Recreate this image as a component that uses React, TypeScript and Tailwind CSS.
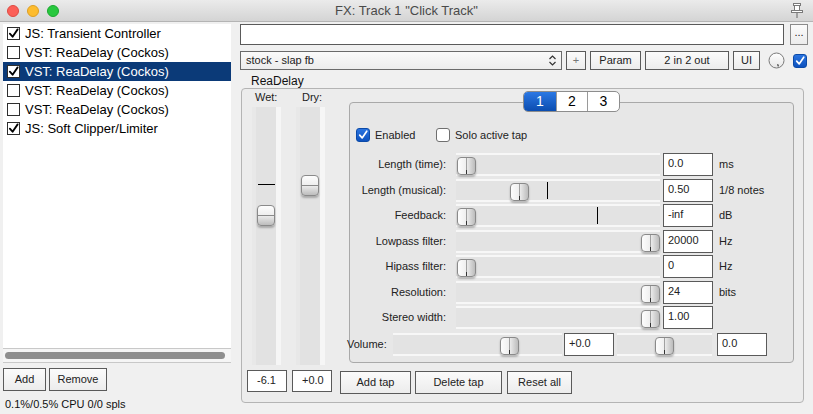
import React from 'react';

type Row = {
  label: string;
  value: string;
  unit?: string;
  thumb: number; // 0..1
  tick?: number; // px offset of the marker line
};

const rows: Row[] = [
  { label: 'Length (time):', value: '0.0', unit: 'ms', thumb: 0 },
  { label: 'Length (musical):', value: '0.50', unit: '1/8 notes', thumb: 0.29, tick: 91 },
  { label: 'Feedback:', value: '-inf', unit: 'dB', thumb: 0, tick: 141 },
  { label: 'Lowpass filter:', value: '20000', unit: 'Hz', thumb: 1 },
  { label: 'Hipass filter:', value: '0', unit: 'Hz', thumb: 0 },
  { label: 'Resolution:', value: '24', unit: 'bits', thumb: 1 },
  { label: 'Stereo width:', value: '1.00', thumb: 1 },
];

const plugins = [
  { name: 'JS: Transient Controller', on: true },
  { name: 'VST: ReaDelay (Cockos)', on: false },
  { name: 'VST: ReaDelay (Cockos)', on: true, selected: true },
  { name: 'VST: ReaDelay (Cockos)', on: false },
  { name: 'VST: ReaDelay (Cockos)', on: false },
  { name: 'JS: Soft Clipper/Limiter', on: true },
];

const CheckMark = ({ color = '#000', size = 11 }: { color?: string; size?: number }) => (
  <svg width={size} height={size} viewBox="0 0 12 12">
    <path d="M2 6.2 L5 9.5 L10.5 1.5" stroke={color} strokeWidth="2" fill="none" strokeLinecap="round" strokeLinejoin="round" />
  </svg>
);

const ListCheck = ({ on }: { on: boolean }) => (
  <div className="w-[13px] h-[13px] border border-[#2e2e2e] bg-white flex items-center justify-center shrink-0">
    {on && <CheckMark />}
  </div>
);

const BlueCheck = () => (
  <div className="w-[14px] h-[14px] rounded-[3px] bg-gradient-to-b from-[#2a74e0] to-[#0d52be] border border-[#0b4aa8] flex items-center justify-center shrink-0">
    <CheckMark color="#fff" size={10} />
  </div>
);

const Btn = ({ children, className = '' }: { children: React.ReactNode; className?: string }) => (
  <div
    className={`flex items-center justify-center border border-[#5a5a5a] bg-gradient-to-b from-[#fbfbfb] to-[#ececec] text-[11px] text-[#222] ${className}`}
  >
    {children}
  </div>
);

const ValueBox = ({ value, className = '' }: { value: string; className?: string }) => (
  <div className={`border border-[#5a5a5a] bg-white text-[11px] leading-[14px] pl-[4px] pt-[2px] text-[#222] shrink-0 ${className}`}>
    {value}
  </div>
);

const HThumb = ({ left }: { left: number }) => (
  <div
    className="absolute top-[2px] w-[19px] h-[18px] rounded-[4px] border border-[#8a8a8a] bg-gradient-to-r from-[#fdfdfd] via-[#eeeeee] to-[#bcbcbc] shadow-[0_2px_2px_rgba(0,0,0,0.25)]"
    style={{ left }}
  >
    <div className="absolute left-[8px] top-0 bottom-0 w-px bg-[#a0a0a0]" />
    <div className="absolute left-[8px] bottom-0 h-[4px] w-px bg-[#333]" />
  </div>
);

const HTrack = ({ width, thumb, tick }: { width: number; thumb: number; tick?: number }) => (
  <div className="relative h-[23px] border-y-2 border-[#f7f7f7] bg-[#e3e3e3] shrink-0" style={{ width }}>
    {tick !== undefined && <div className="absolute top-[1px] h-[17px] w-px bg-black" style={{ left: tick }} />}
    <HThumb left={Math.round(thumb * (width - 20)) + 1} />
  </div>
);

const VTrack = ({ thumbTop, line }: { thumbTop: number; line: number }) => (
  <div className="relative w-[29px] h-[258px] border-l-4 border-l-[#e8e8e8] border-r-[5px] border-r-[#f6f6f6] bg-[#e2e2e2]">
    <div className="absolute left-[2px] w-[17px] h-px bg-black" style={{ top: line }} />
    <div
      className="absolute left-[1px] w-[18px] h-[21px] rounded-[4px] border border-[#8a8a8a] bg-gradient-to-b from-[#fdfdfd] via-[#eeeeee] to-[#bdbdbd] shadow-[0_2px_2px_rgba(0,0,0,0.25)]"
      style={{ top: thumbTop }}
    >
      <div className="absolute top-[9px] left-0 right-0 h-px bg-[#8a8a8a]" />
    </div>
  </div>
);

const TitleBar = () => (
  <div className="relative h-[22px] shrink-0 flex items-center bg-gradient-to-b from-[#ebebeb] to-[#d4d4d4] border-b border-[#b4b4b4]">
    <div className="flex items-center gap-[8px] pl-[7px]">
      <div className="w-[12px] h-[12px] rounded-full bg-[#fc5f57] border border-[#de4a42]" />
      <div className="w-[12px] h-[12px] rounded-full bg-[#fdbc2e] border border-[#de9f23]" />
      <div className="w-[12px] h-[12px] rounded-full bg-[#28c83f] border border-[#1ba82f]" />
    </div>
    <div className="absolute left-0 right-0 text-center text-[13px] text-[#4a4a4a] pointer-events-none">
      FX: Track 1 "Click Track"
    </div>
    <div className="ml-auto mr-[9px]">
      <svg width="14" height="17" viewBox="0 0 14 17">
        <rect x="3.5" y="1.5" width="7" height="2" fill="#fff" stroke="#7a7a7a" />
        <rect x="4.5" y="3.5" width="5" height="5" fill="#fff" stroke="#7a7a7a" />
        <rect x="1.5" y="8.5" width="11" height="2" fill="#fff" stroke="#7a7a7a" />
        <path d="M7 10.5 V16" stroke="#7a7a7a" strokeWidth="1.2" />
      </svg>
    </div>
  </div>
);

const LeftPane = () => (
  <div className="w-[240px] shrink-0 flex flex-col pt-[2px] pl-[3px]">
    <div className="w-[228px] h-[324px] bg-white">
      {plugins.map((p, i) => (
        <div
          key={i}
          className={`h-[19px] flex items-center pl-[4px] text-[13px] ${p.selected ? 'bg-[#0b3a78] text-white' : 'text-black'}`}
        >
          <ListCheck on={p.on} />
          <span className="ml-[5px] whitespace-nowrap">{p.name}</span>
        </div>
      ))}
    </div>
    <div className="w-[228px] h-[15px] border-y border-[#c8c8c8] bg-[#f5f5f5] flex items-center pl-[2px]">
      <div className="w-[220px] h-[7px] rounded-full bg-[#8e8e8e]" />
    </div>
    <div className="flex gap-[3px] mt-[5px]">
      <Btn className="w-[43px] h-[23px]">Add</Btn>
      <Btn className="w-[58px] h-[23px]">Remove</Btn>
    </div>
    <div className="mt-[6px] pl-[2px] text-[11px] leading-[14px] text-[#111]">0.1%/0.5% CPU 0/0 spls</div>
  </div>
);

const TopControls = () => (
  <>
    <div className="flex h-[21px]">
      <div className="w-[544px] border border-[#5a5a5a] bg-white" />
      <Btn className="ml-[6px] w-[18px] h-[21px] border-[#8a8a8a]">
        <span className="-mt-[4px]">...</span>
      </Btn>
    </div>
    <div className="flex items-center h-[19px] mt-[6px]">
      <div className="w-[322px] h-[19px] border border-[#6a6a6a] bg-gradient-to-b from-[#fafafa] to-[#ececec] flex items-center pl-[5px] text-[11px] text-[#222]">
        stock - slap fb
        <svg className="ml-auto mr-[4px]" width="9" height="13" viewBox="0 0 9 13">
          <path d="M1.5 5 L4.5 2 L7.5 5 M1.5 8 L4.5 11 L7.5 8" stroke="#333" strokeWidth="1.2" fill="none" />
        </svg>
      </div>
      <Btn className="ml-[4px] w-[20px] h-[19px] text-[#777]">+</Btn>
      <Btn className="ml-[4px] w-[51px] h-[19px]">Param</Btn>
      <Btn className="ml-[4px] w-[84px] h-[19px]">2 in 2 out</Btn>
      <Btn className="ml-[4px] w-[27px] h-[19px]">UI</Btn>
      <svg className="ml-[8px]" width="17" height="17" viewBox="0 0 17 17">
        <defs>
          <linearGradient id="kn" x1="0" y1="0" x2="0" y2="1">
            <stop offset="0" stopColor="#ffffff" />
            <stop offset="1" stopColor="#e6e6e6" />
          </linearGradient>
        </defs>
        <circle cx="8.5" cy="8.5" r="7.5" fill="url(#kn)" stroke="#7a7a7a" />
        <path d="M9.6 12.2 L10.4 14.4" stroke="#333" strokeWidth="1.2" />
      </svg>
      <div className="ml-[8px]">
        <BlueCheck />
      </div>
    </div>
  </>
);

const ParamRow = ({ row }: { row: Row }) => (
  <div className="flex items-center h-[23px]">
    <div className="w-[96px] text-right text-[11px] text-[#222] whitespace-nowrap">{row.label}</div>
    <div className="ml-[10px]">
      <HTrack width={204} thumb={row.thumb} tick={row.tick} />
    </div>
    <ValueBox value={row.value} className="ml-[3px] w-[50px] h-[23px]" />
    {row.unit && <div className="ml-[6px] text-[11px] text-[#222] whitespace-nowrap">{row.unit}</div>}
  </div>
);

const InnerGroup = () => (
  <div className="ml-[24px] mt-[13px] w-[445px] h-[261px] rounded-[4px] border border-[#a9a9a9] bg-[#e7e7e7] flex flex-col">
    <div className="flex justify-center -mt-[12px]">
      <div className="flex h-[21px] rounded-[5px] border border-[#8d8d8d] bg-white overflow-hidden text-[14px]">
        <div className="w-[32px] flex items-center justify-center text-white bg-gradient-to-b from-[#2b78e4] to-[#0b4db0]">1</div>
        <div className="w-[31px] flex items-center justify-center border-l border-[#9a9a9a]">2</div>
        <div className="w-[32px] flex items-center justify-center border-l border-[#9a9a9a]">3</div>
      </div>
    </div>
    <div className="flex items-center mt-[16px] pl-[6px] h-[14px] text-[11px] text-[#222]">
      <div className="w-[80px] flex items-center">
        <BlueCheck />
        <span className="ml-[5px]">Enabled</span>
      </div>
      <div className="w-[14px] h-[14px] rounded-[3px] border border-[#6f6f6f] bg-white" />
      <span className="ml-[5px]">Solo active tap</span>
    </div>
    <div className="mt-[11px] flex flex-col gap-[2.5px]">
      {rows.map((r, i) => (
        <ParamRow key={i} row={r} />
      ))}
    </div>
    <div className="flex items-center h-[23px] mt-[4px] -ml-[3px]">
      <div className="w-[46px] text-[11px] text-[#222]">Volume:</div>
      <HTrack width={169} thumb={0.71} />
      <ValueBox value="+0.0" className="ml-[2px] w-[50px] h-[23px]" />
      <div className="ml-[3px]">
        <HTrack width={95} thumb={0.49} />
      </div>
      <ValueBox value="0.0" className="ml-[5px] w-[50px] h-[23px]" />
    </div>
  </div>
);

const OuterGroup = () => (
  <div className="ml-[1px] w-[563px] h-[315px] rounded-[4px] border border-[#b4b4b4] bg-[#ececec] flex flex-col">
    <div className="flex">
      <div className="flex pl-[10px]">
        <div className="flex flex-col">
          <div className="mt-[1px] h-[14px] pl-[3px] text-[11px] leading-[14px] text-[#222]">Wet:</div>
          <div className="mt-[3px]">
            <VTrack thumbTop={98} line={77} />
          </div>
        </div>
        <div className="flex flex-col ml-[15px]">
          <div className="mt-[1px] h-[14px] pl-[6px] text-[11px] leading-[14px] text-[#222]">Dry:</div>
          <div className="mt-[3px]">
            <VTrack thumbTop={68} line={77} />
          </div>
        </div>
      </div>
      <InnerGroup />
    </div>
    <div className="flex items-start mt-[5px] pl-[5px]">
      <ValueBox value="-6.1" className="w-[40px] h-[22px] pl-[9px]" />
      <ValueBox value="+0.0" className="ml-[5px] w-[40px] h-[22px] pl-[9px]" />
      <Btn className="ml-[8px] mt-[1px] w-[71px] h-[23px]">Add tap</Btn>
      <Btn className="ml-[4px] mt-[1px] w-[87px] h-[23px]">Delete tap</Btn>
      <Btn className="ml-[5px] mt-[1px] w-[65px] h-[23px]">Reset all</Btn>
    </div>
  </div>
);

const RightPane = () => (
  <div className="flex-1 flex flex-col pt-[2px]">
    <TopControls />
    <div className="mt-[5px] h-[13px] pl-[11px] text-[12px] leading-[13px] text-[#111]">ReaDelay</div>
    <OuterGroup />
  </div>
);

export default function App() {
  return (
    <div className="w-[813px] h-[414px] overflow-hidden bg-[#f0f0f0] flex flex-col font-['Liberation_Sans',Arial,sans-serif]">
      <TitleBar />
      <div className="flex flex-1 min-h-0">
        <LeftPane />
        <RightPane />
      </div>
    </div>
  );
}
